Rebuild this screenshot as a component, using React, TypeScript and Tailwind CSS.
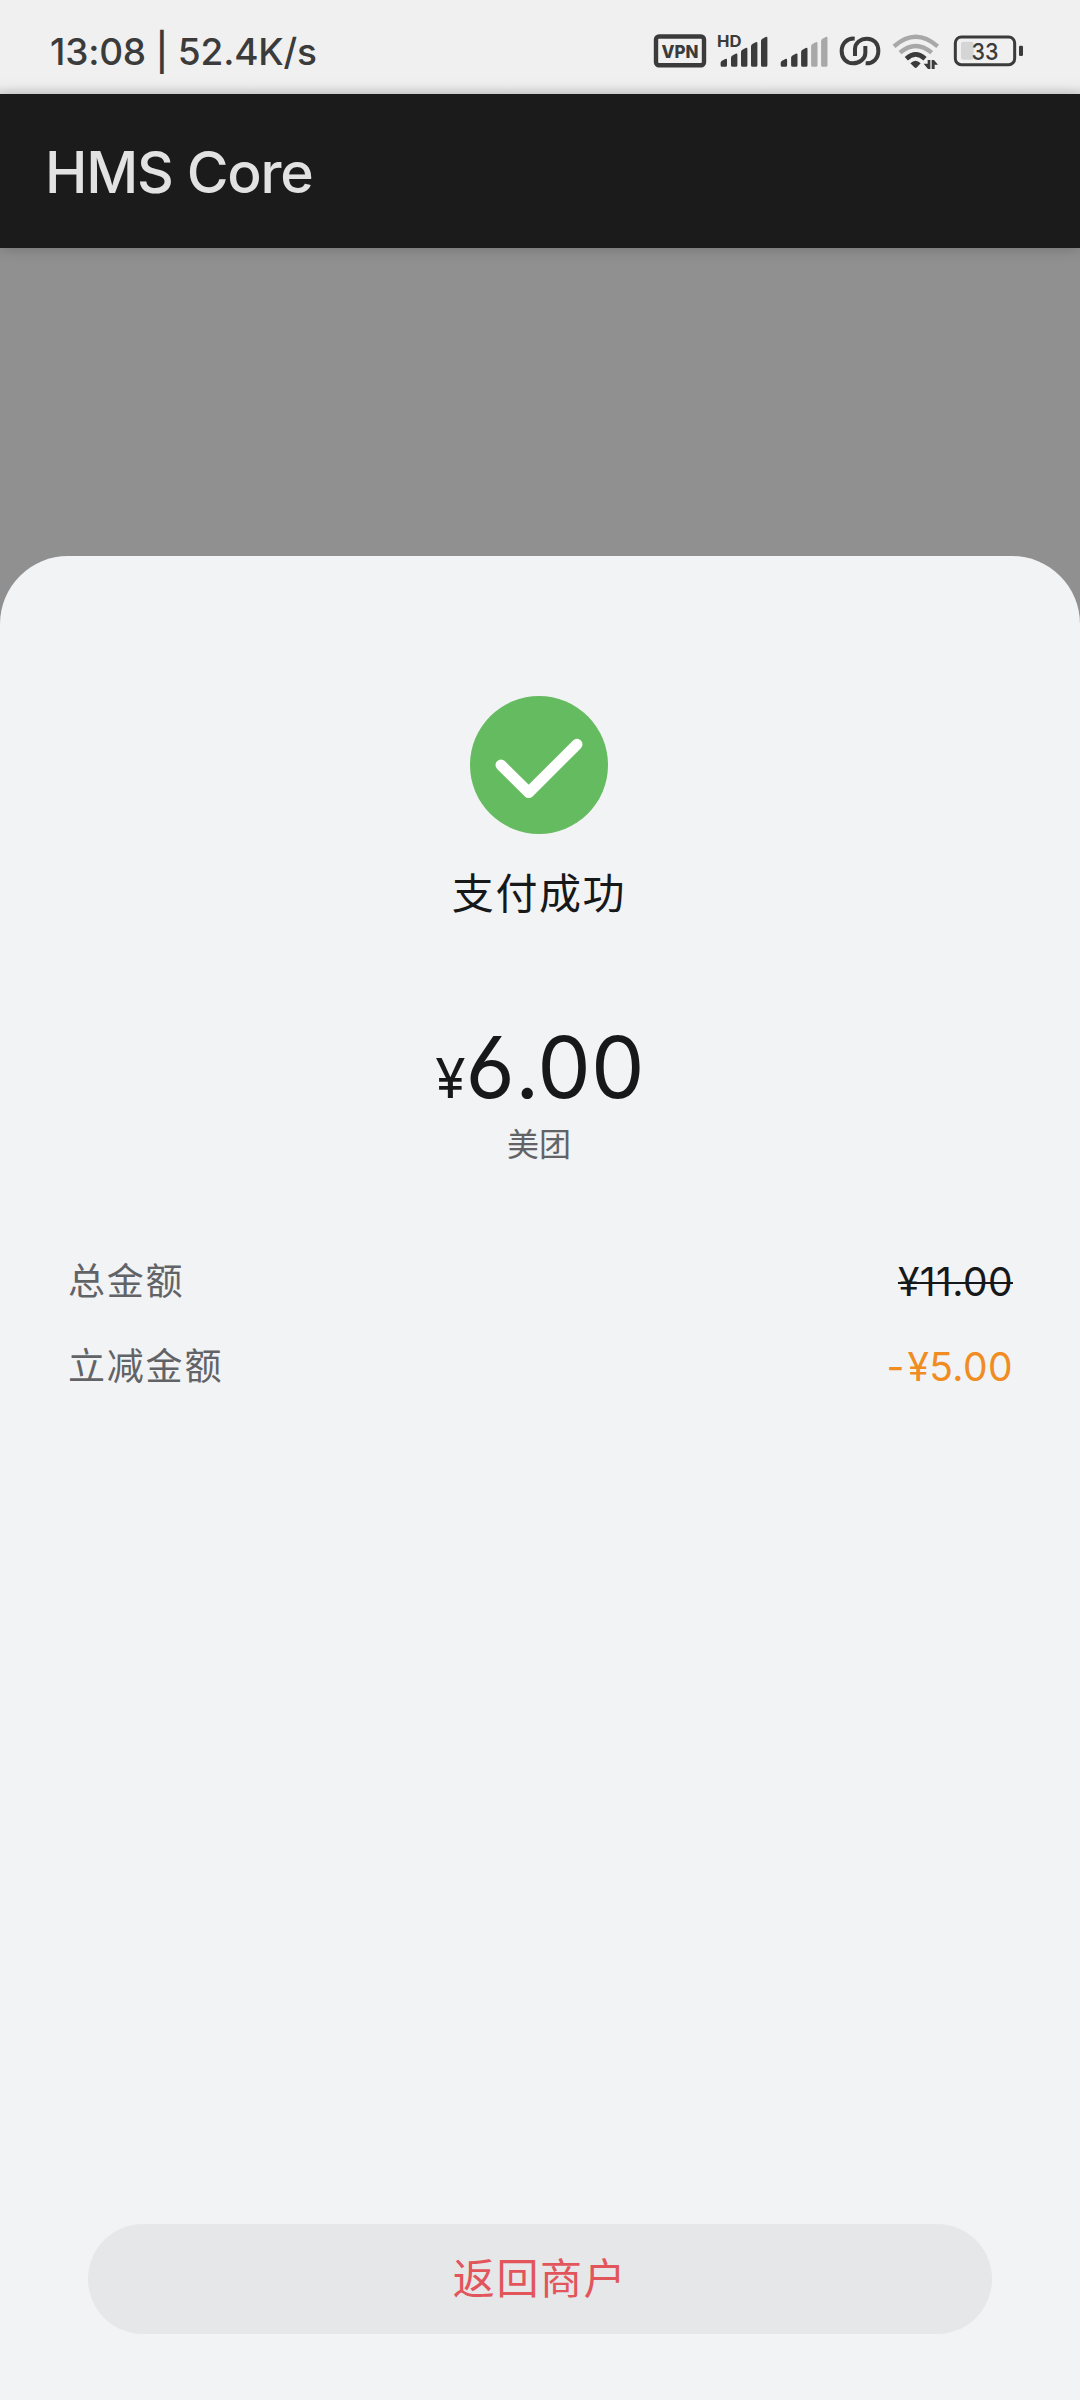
const bars = [
  { x: 0, top: 22 },
  { x: 10.4, top: 16.7 },
  { x: 20.4, top: 11 },
  { x: 30.4, top: 5.3 },
  { x: 40.4, top: 0 },
];

const details = [
  { label: "总金额", value: "¥11.00", valueClass: "text-[#17181a] line-through decoration-2" },
  { label: "立减金额", value: "-¥5.00", valueClass: "text-[#f08c22] first-letter:tracking-[3px]" },
];

function Signal({ x, active }: { x: number; active: number }) {
  return (
    <g transform={`translate(${x} 36.6)`}>
      {bars.map((bar, index) => (
        <path
          key={bar.x}
          d={`M${bar.x} ${bar.top + 4.5}q0-1.6 1.4-2.3l3.2-1.8q1.8-.8 1.8 1V28.6q0 1.5-1.5 1.5h-3.4q-1.5 0-1.5-1.5z`}
          fill={index < active ? "#3b3b3b" : "#a8a8a8"}
        />
      ))}
    </g>
  );
}

function StatusIcons() {
  return (
    <svg width="440" height="94" viewBox="640 0 440 94" fill="none" className="shrink-0">
      <rect x="656" y="36.5" width="48" height="28.8" rx="3" stroke="#3b3b3b" strokeWidth="4.4" />
      <text x="680" y="57.6" textAnchor="middle" textLength="37" lengthAdjust="spacingAndGlyphs" fontSize="18" fontWeight="800" fill="#3b3b3b">
        VPN
      </text>
      <text x="717" y="47.2" textLength="24.5" lengthAdjust="spacingAndGlyphs" fontSize="16" fontWeight="700" fill="#3b3b3b">
        HD
      </text>
      <Signal x={720.6} active={5} />
      <Signal x={780.7} active={3} />

      {/* linked rings */}
      <g transform="translate(820 20) scale(.33333)">
        <path d="M104 56C82 54 65 70 65 93C65 115 79 130 99 130C118 130 136 117 136 99V78" stroke="#3b3b3b" strokeWidth="12" />
        <path d="M137 130C160 131 175 115 175 93C175 70 161 56 141 56C122 56 105 69 105 87V108" stroke="#3b3b3b" strokeWidth="12" />

        {/* wifi */}
        <path d="M222 79Q287 21 353 79" stroke="#a8a8a8" strokeWidth="13" />
        <path d="M240 98Q287 58 335 98" stroke="#a8a8a8" strokeWidth="13" />
        <path d="M259 116Q287 90 315 116" stroke="#3b3b3b" strokeWidth="14" />
        <path d="M271 130Q287 115 302 130L291 142Q287 146 283 142Z" fill="#3b3b3b" />
        <path d="M311 131L324 147H331V120H323V131ZM335 147V120H342L354 134H344V147Z" fill="#3b3b3b" />

        {/* battery */}
        <rect x="423" y="65" width="38" height="54" rx="7" fill="#d5d5d5" />
        <rect x="406" y="51" width="178" height="83" rx="18" stroke="#3b3b3b" strokeWidth="9" />
        <rect x="597" y="77" width="12" height="31" rx="4" fill="#3b3b3b" />
      </g>
      <text x="985" y="60" textAnchor="middle" textLength="27" lengthAdjust="spacingAndGlyphs" fontSize="23.5" fontWeight="500" fill="#3b3b3b">
        33
      </text>
    </svg>
  );
}

export default function App() {
  return (
    <main className="flex h-[2400px] w-[1080px] flex-col overflow-hidden bg-[#909090] font-['Inter','Noto_Sans_CJK_SC',sans-serif] whitespace-nowrap">
      <div className="flex h-[94px] shrink-0 items-center justify-between bg-[linear-gradient(#f0f0f0_82%,#ececec_90%,#dadada)]">
        <span className="pt-[9px] pl-[50px] text-[37px] font-medium tracking-[-0.2px] text-[#3b3b3b]">13:08 | 52.4K/s</span>
        <StatusIcons />
      </div>

      <header className="flex h-[154px] shrink-0 items-center bg-[#1b1b1b] pt-[3px] pl-[45px] shadow-[0_2px_12px_rgba(0,0,0,0.18)]">
        <h1 className="text-[57px] font-medium tracking-[-1.2px] text-[#e2e2e2]">HMS Core</h1>
      </header>

      <section className="mt-[308px] flex flex-1 flex-col items-center rounded-t-[68px] bg-[#f2f3f5] pt-[140px]">
        <svg width="140" height="138" viewBox="0 0 140 138" fill="none" className="shrink-0">
          <circle cx="69" cy="69" r="69" fill="#65bb5f" />
          <path d="M31 69L58.7 96.5L107 48.3" stroke="#fff" strokeWidth="11" strokeLinecap="round" strokeLinejoin="round" />
        </svg>
        <p className="mt-[30px] pr-0.5 text-[42px] leading-[60px] tracking-[1.6px] text-[#17181a]">支付成功</p>

        <p className="mt-[94px] flex items-baseline text-[#17181a] [font-feature-settings:'cv03']">
          <span className="text-[55px] leading-[100px]">¥</span>
          <span className="text-[85px] leading-[100px]">6.00</span>
        </p>
        <p className="mt-[-5px] pr-0.5 text-[32px] leading-[44px] text-[#626366]">美团</p>

        <dl className="mt-[85px] flex w-full flex-col gap-[25px] pr-[67px] pl-[68px]">
          {details.map((item) => (
            <div key={item.label} className="flex h-[60px] items-center justify-between">
              <dt className="text-[37px] tracking-[1.8px] text-[#626366]">{item.label}</dt>
              <dd className={`text-[39px] tracking-[0.4px] ${item.valueClass}`}>{item.value}</dd>
            </div>
          ))}
        </dl>

        <button className="mt-auto mb-[66px] h-[110px] w-[904px] rounded-full bg-[#e6e7e9] pb-[2px] text-[42px] tracking-[1.6px] text-[#e2555a]">
          返回商户
        </button>
      </section>
    </main>
  );
}
